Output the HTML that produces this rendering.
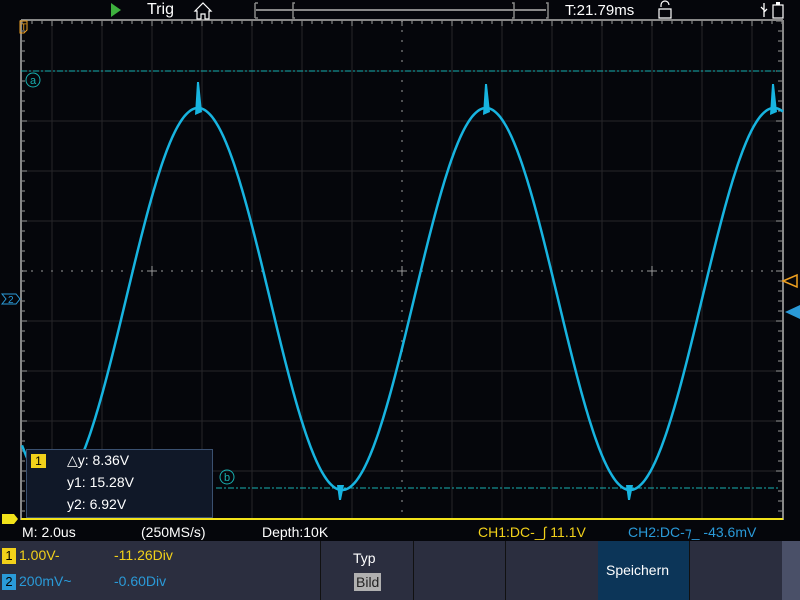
<!DOCTYPE html>
<html><head><meta charset="utf-8"><style>
body{margin:0;width:800px;height:600px;background:#05060b;overflow:hidden;font-family:"Liberation Sans",sans-serif;position:relative}
.t{position:absolute;white-space:nowrap}
</style></head><body>
<svg id="s" width="800" height="600" style="position:absolute;left:0;top:0">
<g id="grid"></g>
<line x1="21" y1="71" x2="780" y2="71" stroke="#18b0b0" stroke-width="1" stroke-dasharray="6,2,2,2"/>
<line x1="216" y1="488" x2="780" y2="488" stroke="#18b0b0" stroke-width="1" stroke-dasharray="6,2,2,2"/>
<circle cx="33" cy="80" r="7" fill="none" stroke="#18b0b0"/>
<text x="33" y="84" fill="#18b0b0" font-size="11" text-anchor="middle" font-family="Liberation Sans">a</text>
<circle cx="227" cy="477" r="7" fill="none" stroke="#18b0b0"/>
<text x="227" y="481" fill="#18b0b0" font-size="11" text-anchor="middle" font-family="Liberation Sans">b</text>
<polyline id="sine" fill="none" stroke="#17b4e0" stroke-width="2.5"/>
<g fill="#17b4e0">
<polygon points="197,82 199,82 202,112 195,115"/>
<polygon points="485,84 487,84 490,112 483,115"/>
<polygon points="772,84 774,84 777,112 770,115"/>
<polygon points="339,500 341,500 344,485 337,485"/>
<polygon points="628,500 630,500 633,485 626,485"/>
</g>
<line x1="21" y1="519.5" x2="783" y2="519.5" stroke="#f2e21a" stroke-width="3"/>
<rect x="0" y="520" width="800" height="20" fill="#05060b"/>
<path d="M20,21 h7 v9 l-3,3 h-4z" fill="none" stroke="#f0a020" stroke-width="1"/>
<text x="21" y="30" fill="#f0a020" font-size="9">T</text>
<path d="M2,294 h14 l4,5 l-4,5 h-14 l4,-5z" fill="none" stroke="#2a9ad8"/>
<text x="8" y="303" fill="#2a9ad8" font-size="10">2</text>
<path d="M2,514 h12 l4,5 l-4,5 h-12z" fill="#f2e21a"/>
<path d="M783,281 l14,-6 v12z" fill="none" stroke="#f0a020" stroke-width="1.5"/>
<path d="M785,312 l15,-7 v14z" fill="#2a9ad8"/>
<path d="M111,3 l10,7 l-10,7z" fill="#3db03d"/>
<path d="M195,11 l8,-8 l8,8 h-2 v8 h-4 v-5 h-4 v5 h-4 v-8z" fill="none" stroke="#fff" stroke-width="1.2"/>
<path d="M255,3 v15 M255,3 h3 M255,18 h3" stroke="#888" stroke-width="1.5" fill="none"/>
<path d="M295,3 h-2 v15 h2 M512,3 h2 v15 h-2 M546,3 h2 v15 h-2" stroke="#888" stroke-width="1.5" fill="none"/>
<line x1="256" y1="10" x2="546" y2="10" stroke="#888" stroke-width="2"/>
<path d="M661,7 v-2 a4,4 0 0 1 8,0 M659,9 h12 v9 h-12z" stroke="#fff" stroke-width="1.2" fill="none"/>
<path d="M764,3 v14 M764,10 l-3,-3 M764,12 l3,-3" stroke="#fff" stroke-width="1.3" fill="none"/>
<rect x="773" y="5" width="10" height="13" fill="none" stroke="#fff" stroke-width="1.2"/>
<rect x="776" y="2" width="4" height="3" fill="#fff"/>
</svg>
<div class="t" style="left:147px;top:1px;color:#fff;font-size:16px">Trig</div>
<div class="t" style="left:565px;top:2px;color:#fff;font-size:15px">T:21.79ms</div>

<div style="position:absolute;left:26px;top:449px;width:185px;height:67px;background:#101828;border:1.5px solid #3a5070"></div>
<div class="t" style="left:31px;top:454px;width:15px;height:14px;background:#f2d11a;color:#000;font-size:12px;text-align:center;line-height:14px">1</div>
<div class="t" style="left:67px;top:452px;color:#fff;font-size:14px">△y: 8.36V</div>
<div class="t" style="left:67px;top:474px;color:#fff;font-size:14px">y1: 15.28V</div>
<div class="t" style="left:67px;top:496px;color:#fff;font-size:14px">y2: 6.92V</div>

<div class="t" style="left:22px;top:524px;color:#fff;font-size:14px">M: 2.0us</div>
<div class="t" style="left:141px;top:524px;color:#fff;font-size:14px">(250MS/s)</div>
<div class="t" style="left:262px;top:524px;color:#fff;font-size:14px">Depth:10K</div>
<div class="t" style="left:478px;top:524px;color:#f2d11a;font-size:14px">CH1:DC-_∫ 11.1V</div>
<div class="t" style="left:628px;top:524px;color:#2a9ad8;font-size:14px">CH2:DC-⁊_ -43.6mV</div>

<div style="position:absolute;left:0;top:541px;width:800px;height:59px;background:#2b2e3f"></div>
<div style="position:absolute;left:320px;top:541px;width:1px;height:59px;background:#111"></div>
<div style="position:absolute;left:413px;top:541px;width:1px;height:59px;background:#111"></div>
<div style="position:absolute;left:505px;top:541px;width:1px;height:59px;background:#111"></div>
<div style="position:absolute;left:598px;top:541px;width:91px;height:59px;background:#0c3558"></div>
<div style="position:absolute;left:689px;top:541px;width:1px;height:59px;background:#111"></div>
<div style="position:absolute;left:782px;top:541px;width:18px;height:59px;background:#4a5068"></div>
<div class="t" style="left:2px;top:548px;width:14px;height:16px;background:#f2d11a;color:#000;font-size:13px;text-align:center;line-height:16px">1</div>
<div class="t" style="left:19px;top:547px;color:#f2d11a;font-size:14px">1.00V-</div>
<div class="t" style="left:114px;top:547px;color:#f2d11a;font-size:14px">-11.26Div</div>
<div class="t" style="left:2px;top:574px;width:14px;height:16px;background:#2a9ad8;color:#000;font-size:13px;text-align:center;line-height:16px">2</div>
<div class="t" style="left:19px;top:573px;color:#2a9ad8;font-size:14px">200mV~</div>
<div class="t" style="left:114px;top:573px;color:#2a9ad8;font-size:14px">-0.60Div</div>
<div class="t" style="left:353px;top:550px;color:#fff;font-size:14px">Typ</div>
<div class="t" style="left:354px;top:573px;background:#b0b0b0;color:#222;font-size:14px;padding:1px 2px">Bild</div>
<div class="t" style="left:606px;top:562px;color:#fff;font-size:14px">Speichern</div>
<script>
var g=document.getElementById('grid'),h='';
for(var x=52;x<783;x+=50){if(x!=402)h+='<line x1="'+x+'" y1="21" x2="'+x+'" y2="519" stroke="#26262a" stroke-width="1"/>';}
for(var y=71;y<520;y+=50){if(y!=271)h+='<line x1="21" y1="'+y+'" x2="783" y2="'+y+'" stroke="#26262a" stroke-width="1"/>';}
for(var x=22;x<783;x+=10)h+='<line x1="'+x+'" y1="270" x2="'+x+'" y2="272" stroke="#999"/>';
for(var y=21;y<520;y+=10)h+='<line x1="401" y1="'+y+'" x2="403" y2="'+y+'" stroke="#999"/>';
for(var x=22;x<783;x+=10)h+='<line x1="'+x+'" y1="20" x2="'+x+'" y2="'+((x-2)%50==0?26:24)+'" stroke="#999"/>';
for(var y=21;y<520;y+=10)h+='<line x1="21" y1="'+y+'" x2="'+((y-21)%50==0?27:25)+'" y2="'+y+'" stroke="#999"/><line x1="783" y1="'+y+'" x2="'+((y-21)%50==0?776:778)+'" y2="'+y+'" stroke="#999"/>';
h+='<line x1="21" y1="20" x2="783" y2="20" stroke="#888" stroke-width="2"/><line x1="21" y1="20" x2="21" y2="520" stroke="#888" stroke-width="2"/><line x1="783" y1="20" x2="783" y2="520" stroke="#888" stroke-width="2"/>';
[152,402,652].forEach(function(c){h+='<line x1="'+(c-5)+'" y1="271" x2="'+(c+5)+'" y2="271" stroke="#999"/><line x1="'+c+'" y1="266" x2="'+c+'" y2="276" stroke="#999"/>';});
g.innerHTML=h;
var p=[];for(var x=22;x<=783;x++){var y=299-191*Math.cos(2*Math.PI*(x-198)/288);p.push(x+','+y.toFixed(1));}
document.getElementById('sine').setAttribute('points',p.join(' '));
</script>
</body></html>
